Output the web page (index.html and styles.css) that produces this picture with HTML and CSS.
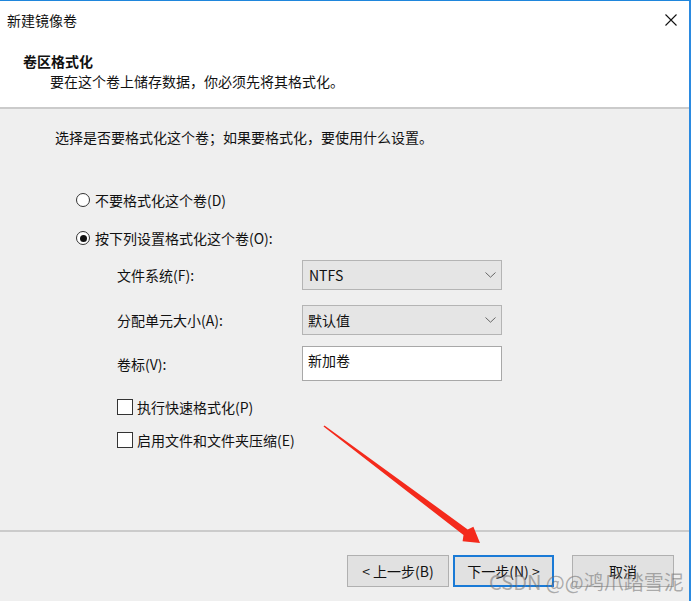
FILE: index.html
```html
<!DOCTYPE html>
<html lang="zh-CN">
<head>
<meta charset="utf-8">
<title>新建镜像卷</title>
<link rel="stylesheet" href="styles.css">
</head>
<body>
<div class="window">
  <header class="head">
    <div class="titlebar">
      <span class="title">新建镜像卷</span>
      <svg class="close" width="12" height="12" viewBox="0 0 12 12"><path d="M0.5 0.5 L11.5 11.5 M11.5 0.5 L0.5 11.5" stroke="#111" stroke-width="1.1" fill="none"/></svg>
    </div>
    <div class="section-title">卷区格式化</div>
    <div class="section-sub">要在这个卷上储存数据，你必须先将其格式化。</div>
  </header>
  <main class="content">
    <p class="intro">选择是否要格式化这个卷；如果要格式化，要使用什么设置。</p>
    <div class="radio-row first"><span class="radio"></span><span>不要格式化这个卷(D)</span></div>
    <div class="radio-row second"><span class="radio checked"></span><span>按下列设置格式化这个卷(O):</span></div>
    <div class="fields">
      <div class="field f1">
        <span class="label">文件系统(F):</span>
        <div class="select"><span>NTFS</span><svg class="chev" width="11" height="6" viewBox="0 0 11 6"><path d="M0.5 0.5 L5.5 5.2 L10.5 0.5" stroke="#666" stroke-width="1" fill="none"/></svg></div>
      </div>
      <div class="field f2">
        <span class="label">分配单元大小(A):</span>
        <div class="select"><span>默认值</span><svg class="chev" width="11" height="6" viewBox="0 0 11 6"><path d="M0.5 0.5 L5.5 5.2 L10.5 0.5" stroke="#666" stroke-width="1" fill="none"/></svg></div>
      </div>
      <div class="field f3">
        <span class="label">卷标(V):</span>
        <div class="textbox">新加卷</div>
      </div>
    </div>
    <div class="check-row c1"><span class="check"></span><span>执行快速格式化(P)</span></div>
    <div class="check-row c2"><span class="check"></span><span>启用文件和文件夹压缩(E)</span></div>
  </main>
  <footer class="foot">
    <div class="btn">&lt; 上一步(B)</div>
    <div class="btn primary">下一步(N) &gt;</div>
    <div class="btn cancel">取消</div>
  </footer>
</div>
<svg class="arrow" width="693" height="603" viewBox="0 0 693 603">
  <polygon points="324.5,425.4 467.7,529.4 473.4,526.8 480,543 462.6,541.2 463.5,535.0 323.5,426.6" fill="#f42a1c"/>
</svg>
<div class="watermark">CSDN @@鸿爪踏雪泥</div>
</body>
</html>
```

FILE: styles.css
```css
html, body {
  margin: 0;
  padding: 0;
  background: #ffffff;
}
body {
  width: 693px;
  height: 603px;
  position: relative;
  overflow: hidden;
  font-family: "Noto Sans CJK SC", "Microsoft YaHei", sans-serif;
  font-size: 14px;
  color: #111;
}
.window {
  width: 689px;
  height: 600px;
  border-top: 1px solid #1f86dc;
  border-right: 2px solid #2b8ae0;
  background: #efefef;
  display: flex;
  flex-direction: column;
}
.head {
  background: #ffffff;
  height: 106px;
  border-bottom: 2px solid #cbcbcb;
  flex: none;
}
.titlebar {
  display: flex;
  align-items: center;
  justify-content: space-between;
  height: 20px;
  margin-top: 9px;
  padding-left: 7px;
  padding-right: 12px;
}
.close {
  display: block;
}
.title {
  line-height: 20px;
}
.section-title {
  font-weight: bold;
  line-height: 20px;
  margin-top: 21px;
  padding-left: 23px;
}
.section-sub {
  line-height: 20px;
  padding-left: 50px;
}
.content {
  height: 421px;
  border-bottom: 2px solid #cbcbcb;
  flex: none;
  display: flex;
  flex-direction: column;
}
.intro {
  margin: 18px 0 0 55px;
  line-height: 20px;
}
.radio-row {
  display: flex;
  align-items: center;
  gap: 5px;
  line-height: 20px;
  padding-left: 76px;
}
.radio-row.first { margin-top: 43px; }
.radio-row.second { margin-top: 18px; }
.radio {
  width: 12px;
  height: 12px;
  border: 1.5px solid #333;
  border-radius: 50%;
  background: #fff;
  position: relative;
  flex: none;
}
.radio.checked::after {
  content: "";
  position: absolute;
  left: 2.5px;
  top: 2.5px;
  width: 7px;
  height: 7px;
  border-radius: 50%;
  background: #111;
}
.fields {
  display: flex;
  flex-direction: column;
  padding-left: 117px;
  margin-top: 12px;
}
.field {
  display: flex;
  align-items: center;
}
.field.f2 { margin-top: 15px; }
.field.f3 { margin-top: 11px; }
.label {
  width: 185px;
  line-height: 20px;
}
.select {
  width: 188px;
  height: 28px;
  border: 1px solid #b4b4b4;
  background: #e5e5e5;
  display: flex;
  align-items: center;
  justify-content: space-between;
  padding: 0 5px 0 5px;
  box-sizing: content-box;
}
.select span {
  line-height: 20px;
}
.f1 .select span { padding-left: 1px; }
.chev {
  display: block;
}
.textbox {
  width: 188px;
  height: 29px;
  border: 1px solid #a8a8a8;
  background: #fff;
  padding: 4px 5px 0 5px;
  line-height: 18px;
  box-sizing: content-box;
}
.check-row {
  display: flex;
  align-items: center;
  gap: 4px;
  line-height: 20px;
  padding-left: 117px;
}
.check-row.c1 { margin-top: 16px; }
.check-row.c2 { margin-top: 13px; }
.check {
  width: 14px;
  height: 14px;
  border: 1px solid #333;
  background: #fff;
  flex: none;
}
.foot {
  flex: 1;
  display: flex;
  justify-content: flex-end;
  align-items: flex-start;
  padding-top: 23px;
  padding-right: 15px;
}
.btn {
  width: 100px;
  height: 30px;
  border: 1px solid #b0b0b0;
  background: #e1e1e1;
  display: flex;
  align-items: center;
  justify-content: center;
  line-height: 20px;
  margin-left: 4px;
}
.btn.primary {
  width: 97px;
  height: 28px;
  border: 2px solid #1a7ad6;
}
.btn.cancel {
  margin-left: 18px;
}
.arrow {
  position: absolute;
  left: 0;
  top: 0;
  pointer-events: none;
}
.watermark {
  position: absolute;
  left: 489px;
  top: 568px;
  font-size: 20px;
  line-height: 28px;
  color: rgba(110, 110, 110, 0.55);
  white-space: nowrap;
}
```
